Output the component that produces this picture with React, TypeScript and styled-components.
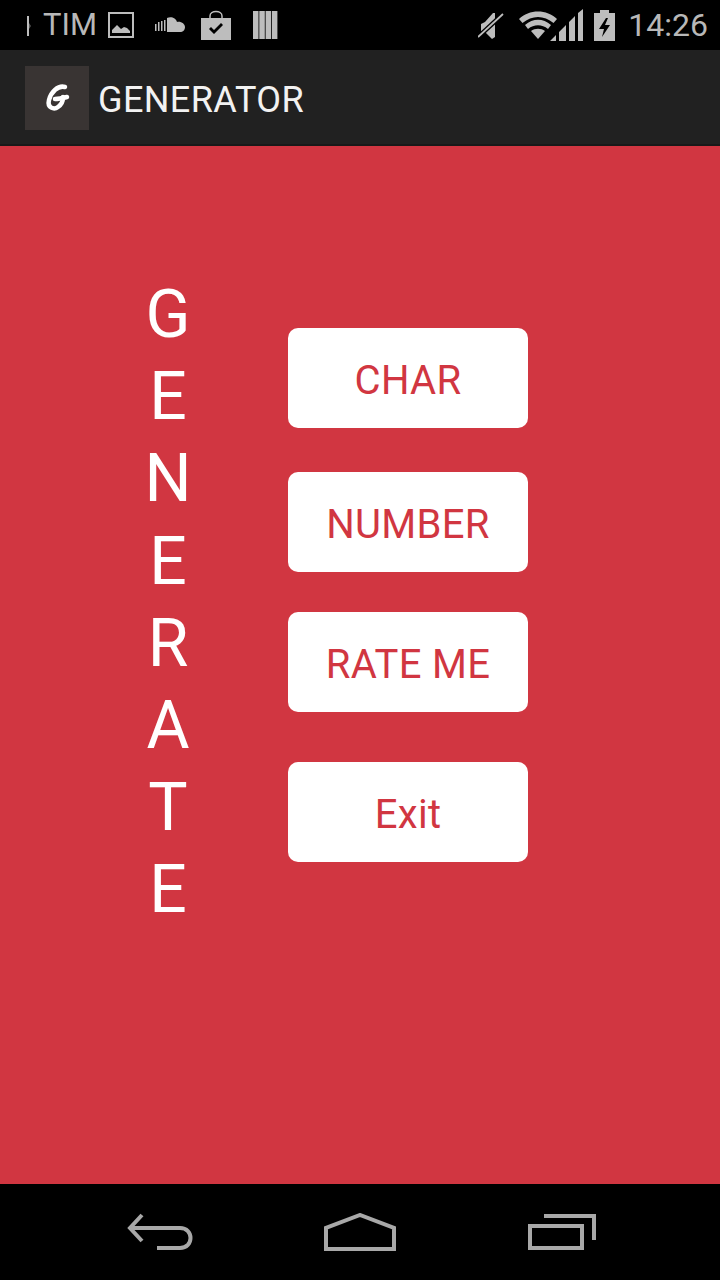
import React from "react";
import styled, { createGlobalStyle } from "styled-components";

const GlobalStyle = createGlobalStyle`
  html, body { margin: 0; padding: 0; background: #000; }
  body { font-family: Roboto, "Liberation Sans", sans-serif; }
`;

const Screen = styled.div`
  width: 720px;
  height: 1280px;
  display: flex;
  flex-direction: column;
  overflow: hidden;
`;

const StatusBar = styled.div`
  height: 50px;
  background: #000;
  color: #b8b8b8;
  display: flex;
  align-items: center;
  justify-content: space-between;
  padding: 0 12px 0 26px;
`;

const StatusGroup = styled.div`
  display: flex;
  align-items: center;
`;

const StatusIcon = styled.svg<{ $left: number }>`
  display: block;
  margin-left: ${(p) => p.$left}px;
  fill: #bdbdbd;
`;

const Carrier = styled.span`
  font-size: 31px;
  line-height: 50px;
  margin-left: 12px;
`;

const Clock = styled.span`
  font-size: 32px;
  line-height: 50px;
  margin-left: 13px;
`;

const ActionBar = styled.div`
  height: 96px;
  box-sizing: border-box;
  background: #212121;
  border-bottom: 2px solid #191919;
  display: flex;
  align-items: center;
  padding: 2px 0 0 25px;
`;

const AppLogo = styled.div`
  width: 64px;
  height: 64px;
  background: #393433;
  display: flex;
  align-items: center;
  justify-content: center;
`;

const AppTitle = styled.h1`
  margin: 4px 0 0 9px;
  font-size: 36px;
  letter-spacing: 0.4px;
  font-weight: 400;
  color: #f2f2f2;
`;

const Content = styled.main`
  flex: 1;
  background: #d13641;
  display: flex;
  align-items: flex-start;
`;

const Letters = styled.div`
  width: 96px;
  margin: 128px 0 0 120px;
  display: flex;
  flex-direction: column;
  align-items: center;
`;

const Letter = styled.span`
  font-size: 66px;
  line-height: 82.2px;
  color: #fff;
`;

const Buttons = styled.div`
  margin: 182px 0 0 72px;
  display: flex;
  flex-direction: column;
`;

const ActionButton = styled.button<{ $top: number }>`
  width: 240px;
  height: 100px;
  margin-top: ${(p) => p.$top}px;
  border: none;
  border-radius: 10px;
  background: #fff;
  color: #d13641;
  font-family: Roboto, "Liberation Sans", sans-serif;
  font-size: 40px;
  letter-spacing: 0.3px;
  padding: 4px 0 0;
`;

const NavBar = styled.nav`
  height: 96px;
  background: #000;
  display: flex;
  align-items: center;
  padding-left: 127px;
`;

const NavIcon = styled.svg<{ $left: number }>`
  display: block;
  margin-left: ${(p) => p.$left}px;
  fill: none;
  stroke: #a8a8a8;
  stroke-width: 4;
`;

export default function App() {
  return (
    <Screen>
      <GlobalStyle />
      <StatusBar>
        <StatusGroup>
          <StatusIcon $left={0} width="5" height="22" viewBox="0 0 5 22">
            <rect x="1" y="2" width="2" height="20" />
            <path d="M3 9l2 3-2 3z" fill="#555" />
          </StatusIcon>
          <Carrier>TIM</Carrier>
          <StatusIcon $left={11} width="26" height="26" viewBox="0 0 26 26">
            <path d="M1 1h24v24H1z" fill="none" stroke="#bdbdbd" strokeWidth="2" />
            <path d="M4 21v-3l5-5 4 4 3-2 3 1 3 3v2z" />
          </StatusIcon>
          <StatusIcon $left={20} width="31" height="16" viewBox="0 0 31 16">
            <path d="M1 7h1.500v7H1zM4 5h1.500v9H4zM7 4h1.500v10H7zM10 3h1.500v11H10zM13 1c4-2 9 0 10 4 4-1 8 2 8 5s-2 5-5 5H13z" />
          </StatusIcon>
          <StatusIcon $left={15} width="32" height="30" viewBox="0 0 32 30">
            <path d="M10 9V6c0-6 12-6 12 0v3" fill="none" stroke="#bdbdbd" strokeWidth="1.5" />
            <path d="M1 8h30v22H1z" />
            <path d="M9 19l2-2 3 3 7-7 2 2-9 9z" fill="#000" />
          </StatusIcon>
          <StatusIcon $left={21} width="25" height="30" viewBox="0 0 25 30">
            <path d="M0 1h5.500v28H0zM6.300 1h5.500v28H6.300zM12.600 1h5.500v28h-5.500zM18.900 1h5.500v28h-5.500z" />
          </StatusIcon>
        </StatusGroup>
        <StatusGroup>
          <StatusIcon $left={0} width="26" height="30" viewBox="0 0 26 30">
            <path d="M3 14l4-2 8-9h2v24l-3 2-8-8H3z" />
            <path d="M0 27L25 4" stroke="#000" strokeWidth="4.500" />
            <path d="M0 27L25 4" stroke="#bdbdbd" strokeWidth="1.800" />
          </StatusIcon>
          <StatusIcon $left={15} width="38" height="28" viewBox="0 0 38 28">
            <path d="M0 8C10-2 28-2 38 8l-3.500 4C25 4 13 4 3.500 12z" />
            <path d="M6 14c8-7 18-7 26 0l-3 4c-6-5-14-5-20 0z" />
            <path d="M12 20c4-3 10-3 14 0L19 28z" />
          </StatusIcon>
          <StatusIcon $left={-7} width="34" height="32" viewBox="0 0 34 32">
            <path d="M0 32l6-6v6zM9 32v-9l7-7v16zM19 32V13l6-6v25zM28 32V4l5-4v32z" />
          </StatusIcon>
          <StatusIcon $left={10} width="21" height="32" viewBox="0 0 21 32">
            <path fillRule="evenodd" d="M6 1h9v3h6v28H0V4h6zM12 9l-7 11h5l-2 8 8-12h-5l3-7z" />
          </StatusIcon>
          <Clock>14:26</Clock>
        </StatusGroup>
      </StatusBar>
      <ActionBar>
        <AppLogo>
          <svg width="30" height="34" viewBox="0 0 30 34" fill="none" stroke="#fff" strokeWidth="4.500" strokeLinecap="round">
            <path d="M23 6C16 4 9 11 7 19c-2 8 5 10 9 7 3-2 5-6 5-10" />
            <path d="M13 18c4 0 8-1 12-2" />
          </svg>
        </AppLogo>
        <AppTitle>GENERATOR</AppTitle>
      </ActionBar>
      <Content>
        <Letters>
          {"GENERATE".split("").map((letter, i) => (
            <Letter key={i}>{letter}</Letter>
          ))}
        </Letters>
        <Buttons>
          <ActionButton $top={0}>CHAR</ActionButton>
          <ActionButton $top={44}>NUMBER</ActionButton>
          <ActionButton $top={40}>RATE ME</ActionButton>
          <ActionButton $top={50}>Exit</ActionButton>
        </Buttons>
      </Content>
      <NavBar>
        <NavIcon $left={0} width="66" height="38" viewBox="0 0 66 38">
          <path d="M15 2L3 15l12 13" />
          <path d="M3 15h50c14 0 14 20 0 20H30" />
        </NavIcon>
        <NavIcon $left={131} width="72" height="38" viewBox="0 0 72 38">
          <path d="M2 36V15L36 2l34 13v21z" />
        </NavIcon>
        <NavIcon $left={132} width="68" height="36" viewBox="0 0 68 36">
          <path d="M16 2h50v24" />
          <path d="M2 12h52v22H2z" />
        </NavIcon>
      </NavBar>
    </Screen>
  );
}
